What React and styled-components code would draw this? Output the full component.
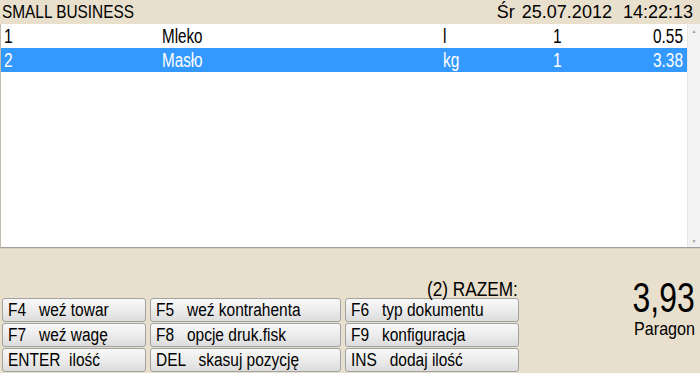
import styled, { createGlobalStyle } from 'styled-components'

// Global
const GlobalStyle = createGlobalStyle`
  html, body {
    margin: 0;
    padding: 0;
    background: #e8dfcc;
  }
  body {
    font-family: "Liberation Sans", Arial, sans-serif;
    color: #000;
  }
`

// Narrowed text: the POS font is an Arial Narrow look-alike
const Narrow = styled.span`
  display: inline-block;
  white-space: pre;
  transform: scaleX(${p => p.$sx || 0.8});
  transform-origin: ${p => (p.$right ? 'right' : 'left')} center;
`

const Screen = styled.div`
  width: 700px;
  height: 373px;
  display: flex;
  flex-direction: column;
  overflow: hidden;
  background: #e8dfcc;
`

const TopBar = styled.div`
  height: 24px;
  flex: none;
  display: flex;
  justify-content: space-between;
  align-items: center;
  padding: 0 7px 0 2px;
  font-size: 19px;
  line-height: 24px;
`

const Clock = styled.div`
  display: flex;
  gap: 7px;
  font-size: 18px;

  span:last-child {
    margin-left: 4px;
  }
`

const ListBox = styled.div`
  height: 224px;
  flex: none;
  display: flex;
  background: #fff;
  border-left: 1px solid #c4bcb0;
  border-bottom: 1px solid #a39c98;
  box-shadow: 0 1px 0 #d9d0bf;
  box-sizing: border-box;
`

const Rows = styled.div`
  flex: 1;
`

const Row = styled.div`
  display: grid;
  grid-template-columns: 158px 281px 110px 60px 1fr;
  height: 24px;
  line-height: 24px;
  padding: 0 4px 0 3px;
  font-size: 19.5px;
  background: ${p => (p.$selected ? '#3399ff' : 'transparent')};
  color: ${p => (p.$selected ? '#fff' : '#000')};
`

const Price = styled.span`
  text-align: right;
`

const ScrollTrack = styled.div`
  width: 12px;
  background: #f3f3f3;
  border-left: 1px solid #e6e6e6;
  display: flex;
  flex-direction: column;
  justify-content: space-between;
  align-items: center;
  padding: 4px 0 3px;
  font-size: 5px;
  line-height: 6px;
  color: #9a9a9a;
`

const Bottom = styled.div`
  flex: 1;
  display: flex;
  padding: 0 5px 1px 2px;
`

const Commands = styled.div`
  width: 516px;
  display: flex;
  flex-direction: column;
  justify-content: flex-end;
`

const Total = styled.div`
  text-align: right;
  font-size: 21px;
  line-height: 18px;
`

const Keys = styled.div`
  display: grid;
  grid-template-columns: 144px 191px 174px;
  grid-auto-rows: 24px;
  column-gap: 4px;
  row-gap: 1px;
`

const Key = styled.div`
  box-sizing: border-box;
  border: 1px solid #a2a2a2;
  border-radius: 3px;
  background: linear-gradient(#f8f8f8 0%, #efefef 40%, #dcdcdc 100%);
  font-size: 18px;
  line-height: 22px;
  padding-left: 5px;
`

const Summary = styled.div`
  flex: 1;
  display: flex;
  flex-direction: column;
  align-items: flex-end;
  padding-top: 32px;
`

const Amount = styled.div`
  font-size: 42px;
  line-height: 36px;
`

const DocType = styled.div`
  font-size: 18.5px;
  line-height: 20px;
  margin-top: 3px;
`

const items = [
  { lp: 1, name: 'Mleko', unit: 'l', qty: 1, price: '0.55' },
  { lp: 2, name: 'Masło', unit: 'kg', qty: 1, price: '3.38', selected: true },
]

const keys = [
  'F4   weź towar', 'F5   weź kontrahenta', 'F6   typ dokumentu',
  'F7   weź wagę', 'F8   opcje druk.fisk', 'F9   konfiguracja',
  'ENTER  ilość', 'DEL   skasuj pozycję', 'INS   dodaj ilość',
]

const App = () => (
  <Screen>
    <GlobalStyle />
    <TopBar>
      <Narrow $sx={0.81}>SMALL BUSINESS</Narrow>
      <Clock>
        <span>Śr</span>
        <span>25.07.2012</span>
        <span>14:22:13</span>
      </Clock>
    </TopBar>
    <ListBox>
      <Rows>
        {items.map(item => (
          <Row key={item.lp} $selected={item.selected}>
            <span><Narrow>{item.lp}</Narrow></span>
            <span><Narrow $sx={0.78}>{item.name}</Narrow></span>
            <span><Narrow>{item.unit}</Narrow></span>
            <span><Narrow>{item.qty}</Narrow></span>
            <Price><Narrow $right $sx={0.79}>{item.price}</Narrow></Price>
          </Row>
        ))}
      </Rows>
      <ScrollTrack>
        <span>▲</span>
        <span>▼</span>
      </ScrollTrack>
    </ListBox>
    <Bottom>
      <Commands>
        <Total><Narrow $right $sx={0.82}>(2) RAZEM:</Narrow></Total>
        <Keys>
          {keys.map(k => (
            <Key key={k}><Narrow $sx={0.86}>{k}</Narrow></Key>
          ))}
        </Keys>
      </Commands>
      <Summary>
        <Amount><Narrow $right $sx={0.76}>3,93</Narrow></Amount>
        <DocType><Narrow $right $sx={0.87}>Paragon</Narrow></DocType>
      </Summary>
    </Bottom>
  </Screen>
)

export default App
